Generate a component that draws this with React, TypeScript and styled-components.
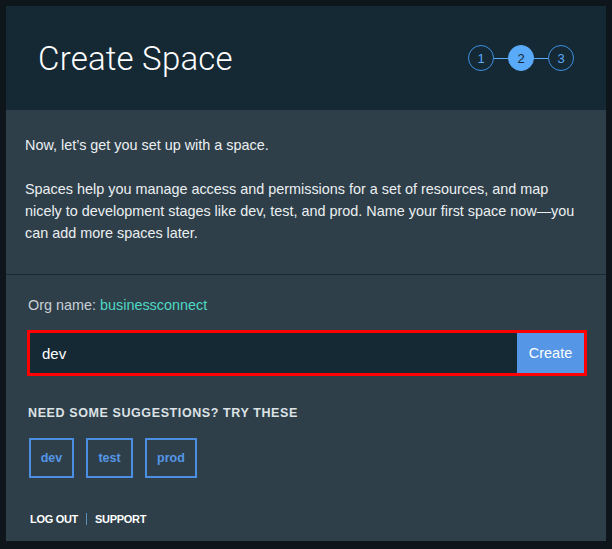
import React from "react";
import styled, { createGlobalStyle } from "styled-components";

const Global = createGlobalStyle`
  html, body { margin: 0; padding: 0; background: #0e161c; }
  body { font-family: "Liberation Sans", Arial, sans-serif; }
  * { box-sizing: border-box; }
`;

const Page = styled.div`
  width: 612px;
  height: 549px;
  padding: 6px 6px 8px 6px;
  background: #0e161c;
`;

const Panel = styled.div`
  width: 600px;
  height: 535px;
  background: #2e3f4a;
  display: flex;
  flex-direction: column;
`;

const Header = styled.header`
  height: 104px;
  flex-shrink: 0;
  background: #152935;
  display: flex;
  align-items: center;
  justify-content: space-between;
  padding: 0 32px 0 32px;
`;

const Title = styled.h1`
  margin: 0;
  font-family: "Roboto", "Liberation Sans", sans-serif;
  font-weight: 300;
  font-size: 33px;
  color: #ffffff;
  letter-spacing: 0.2px;
`;

const Steps = styled.div`
  display: flex;
  align-items: center;
`;

const Step = styled.div<{ $active?: boolean }>`
  width: 26px;
  height: 26px;
  border-radius: 50%;
  border: 1px solid ${(p) => (p.$active ? "#5aaafa" : "#3f8fe0")};
  background: ${(p) => (p.$active ? "#5aaafa" : "transparent")};
  color: ${(p) => (p.$active ? "#152935" : "#5aaafa")};
  font-family: "Liberation Sans", Arial, sans-serif;
  font-size: 13px;
  display: flex;
  align-items: center;
  justify-content: center;
`;

const StepLine = styled.div`
  width: 14px;
  height: 1px;
  background: #5aaafa;
`;

const Intro = styled.section`
  padding: 24px 26px 30px 19px;
  border-bottom: 1px solid #1a2a33;
  color: #eceff1;
  font-size: 14.4px;
  line-height: 22px;
`;

const Para = styled.p`
  margin: 0 0 22px 0;
  &:last-child { margin-bottom: 0; }
`;

const Form = styled.section`
  padding: 20px 19px 15px 21px;
  display: flex;
  flex-direction: column;
  flex: 1;
`;

const OrgLine = styled.div`
  font-size: 14.4px;
  line-height: 21px;
  color: #c9d0d4;
  padding-left: 1px;
`;

const OrgName = styled.span`
  color: #4fd8c4;
`;

const Highlight = styled.div`
  margin-top: 14px;
  border: 3px solid #ff0000;
  display: flex;
  height: 46px;
`;

const Input = styled.div`
  flex: 1;
  background: #152935;
  color: #ffffff;
  font-size: 15px;
  display: flex;
  align-items: center;
  padding-left: 12px;
`;

const CreateButton = styled.button`
  width: 67px;
  border: none;
  background: #5596e6;
  color: #ffffff;
  font-family: "Liberation Sans", Arial, sans-serif;
  font-size: 14.5px;
  padding: 0;
`;

const SuggestHeading = styled.div`
  margin-top: 29px;
  font-size: 12.5px;
  line-height: 16px;
  font-weight: 700;
  letter-spacing: 0.6px;
  color: #dde2e5;
  padding-left: 1px;
`;

const Chips = styled.div`
  margin-top: 17px;
  display: flex;
  gap: 12px;
  padding-left: 2px;
`;

const Chip = styled.button<{ $w: number }>`
  width: ${(p) => p.$w}px;
  height: 40px;
  border: 2px solid #4a8fe2;
  background: transparent;
  color: #5596e6;
  font-family: "Liberation Sans", Arial, sans-serif;
  font-weight: 700;
  font-size: 12.5px;
  padding: 0;
`;

const Footer = styled.div`
  margin-top: 34px;
  display: flex;
  align-items: center;
  gap: 8px;
  font-size: 11px;
  line-height: 14px;
  font-weight: 700;
  color: #ffffff;
  padding-left: 3px;
  letter-spacing: -0.3px;
`;

const Sep = styled.span`
  width: 1px;
  height: 12px;
  background: #5a8fb8;
`;

export default function App() {
  return (
    <Page>
      <Global />
      <Panel>
        <Header>
          <Title>Create Space</Title>
          <Steps>
            <Step>1</Step>
            <StepLine />
            <Step $active>2</Step>
            <StepLine />
            <Step>3</Step>
          </Steps>
        </Header>
        <Intro>
          <Para>Now, let’s get you set up with a space.</Para>
          <Para>
            Spaces help you manage access and permissions for a set of resources, and map
            nicely to development stages like dev, test, and prod. Name your first space now—you
            can add more spaces later.
          </Para>
        </Intro>
        <Form>
          <OrgLine>
            Org name: <OrgName>businessconnect</OrgName>
          </OrgLine>
          <Highlight>
            <Input>dev</Input>
            <CreateButton>Create</CreateButton>
          </Highlight>
          <SuggestHeading>NEED SOME SUGGESTIONS? TRY THESE</SuggestHeading>
          <Chips>
            <Chip $w={45}>dev</Chip>
            <Chip $w={47}>test</Chip>
            <Chip $w={52}>prod</Chip>
          </Chips>
          <Footer>
            <span>LOG OUT</span>
            <Sep />
            <span>SUPPORT</span>
          </Footer>
        </Form>
      </Panel>
    </Page>
  );
}
